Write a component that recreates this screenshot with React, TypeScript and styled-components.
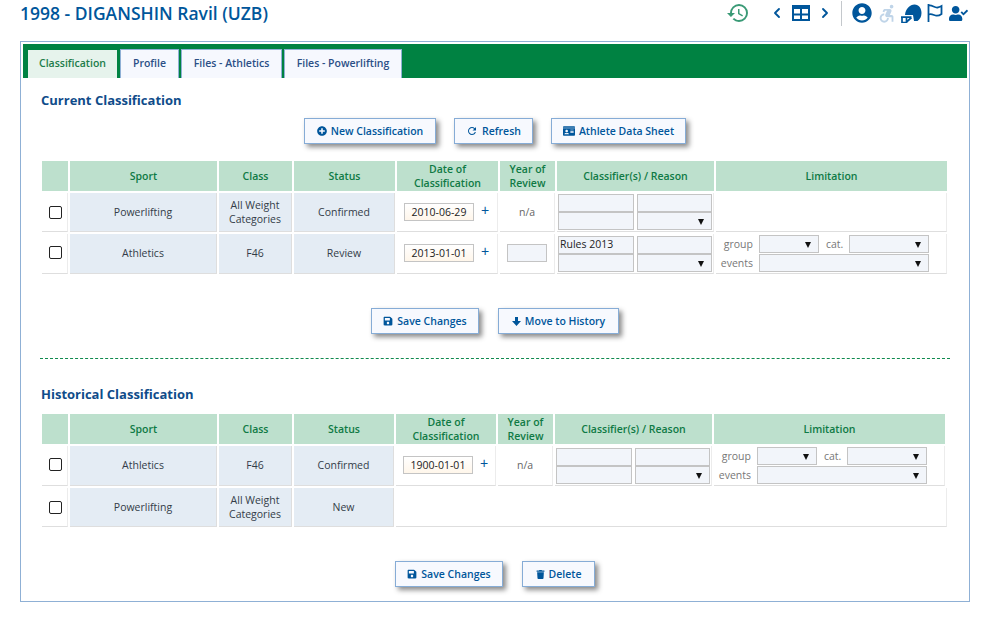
import React from 'react';
import styled, { createGlobalStyle } from 'styled-components';
import { ChevronLeft, ChevronRight } from 'lucide-react';
import {
  FaIdCard,
  FaPlusCircle,
  FaSave,
  FaTrash,
  FaUserCheck,
  FaUserCircle,
} from 'react-icons/fa';
import { MdAccessibleForward, MdHistory, MdRefresh } from 'react-icons/md';

const BLUE = '#00569b';
const FONT = `'Open Sans', 'Noto Sans', sans-serif`;

const GlobalStyle = createGlobalStyle`
  html, body {
    margin: 0;
    padding: 0;
    background: #fff;
    font-family: ${FONT};
    font-size: 10.5px;
    color: #333;
  }
`;

const Page = styled.div`
  width: 990px;
  height: 621px;
  overflow: hidden;
  box-sizing: border-box;
`;

const TopBar = styled.header`
  height: 41px;
  display: flex;
  align-items: flex-start;
  justify-content: space-between;
  padding: 0 20px;
  box-sizing: border-box;
`;

const Title = styled.h1`
  margin: 2px 0 0;
  font-size: 17.5px;
  line-height: 22px;
  font-weight: 600;
  color: ${BLUE};
`;

const Tools = styled.div`
  display: flex;
  align-items: center;
  height: 26px;
  color: ${BLUE};
`;

const ToolSlot = styled.span<{ $w: number; $color?: string }>`
  width: ${({ $w }) => $w}px;
  display: flex;
  justify-content: center;
  color: ${({ $color }) => $color || 'inherit'};
`;

const Divider = styled.span`
  width: 1px;
  height: 25px;
  background: #c4c8cc;
  margin: 0 6px 0 8px;
`;

const Panel = styled.main`
  width: 950px;
  height: 561px;
  margin-left: 20px;
  box-sizing: border-box;
  border: 1px solid #8fb0d5;
  padding: 2px;
`;

const TabBar = styled.nav`
  height: 34px;
  background: #008242;
  display: flex;
  align-items: flex-end;
  padding-left: 5px;
  gap: 2px;
  box-sizing: border-box;
`;

const Tab = styled.div<{ $active?: boolean; $w: number }>`
  width: ${({ $w }) => $w}px;
  height: ${({ $active }) => ($active ? 28 : 29)}px;
  margin-right: ${({ $active }) => ($active ? 1 : 0)}px;
  padding-bottom: 3px;
  box-sizing: border-box;
  display: flex;
  align-items: center;
  justify-content: center;
  font-size: 10.5px;
  font-weight: 600;
  color: ${({ $active }) => ($active ? '#1c7d4a' : '#2b4f86')};
  background: ${({ $active }) => ($active ? '#e6f3ec' : '#f6f8fe')};
  border: ${({ $active }) => ($active ? 'none' : '1px solid #8fb0d5')};
  border-bottom: none;
`;

const Content = styled.div`
  padding: 0 0 0 17px;
`;

const Heading = styled.h2<{ $top: number }>`
  margin: ${({ $top }) => $top}px 0 0 1px;
  font-size: 13px;
  line-height: 18px;
  font-weight: 700;
  color: #0f4c8a;
`;

const ButtonRow = styled.div<{ $top: number; $left: number; $gap: number }>`
  display: flex;
  gap: ${({ $gap }) => $gap}px;
  margin: ${({ $top }) => $top}px 0 0 ${({ $left }) => $left}px;
`;

const Action = styled.button<{ $w: number }>`
  width: ${({ $w }) => $w}px;
  height: 26px;
  padding: 0;
  display: flex;
  align-items: center;
  justify-content: center;
  gap: 4px;
  background: #f7f9fe;
  border: 1px solid #86acd6;
  box-shadow: 3px 3px 5px #8a8a8a;
  font-family: ${FONT};
  font-size: 10.5px;
  font-weight: 600;
  color: ${BLUE};
`;

const Grid = styled.table<{ $top: number }>`
  width: 909px;
  table-layout: fixed;
  border-collapse: separate;
  border-spacing: 2px;
  margin-top: ${({ $top }) => $top}px;
`;

const Col = styled.col<{ $w: number }>`
  width: ${({ $w }) => $w}px;
`;

const Head = styled.th`
  height: 30px;
  padding: 0;
  background: #bde0cd;
  color: #0f7a45;
  font-size: 10.5px;
  line-height: 14px;
  font-weight: 600;
  text-align: center;
`;

const Cell = styled.td<{ $shade?: boolean; $tall?: boolean; $lift?: boolean }>`
  height: ${({ $tall }) => ($tall ? 40 : 39)}px;
  padding: 0 0 ${({ $lift }) => ($lift ? 2 : 0)}px;
  box-sizing: border-box;
  text-align: center;
  font-size: 10.5px;
  line-height: 14px;
  color: ${({ $shade }) => ($shade ? '#333c48' : '#666')};
  background: ${({ $shade }) => ($shade ? '#e4ecf4' : '#fff')};
  border-bottom: 1px solid #dedede;
  border-right: 1px solid ${({ $shade }) => ($shade ? '#dedede' : '#ececec')};
`;

const Tick = styled.input.attrs({ type: 'checkbox' })`
  appearance: none;
  display: block;
  width: 13px;
  height: 13px;
  margin: 0 0 0 7px;
  box-sizing: border-box;
  border: 1px solid #222;
  border-radius: 2px;
  background: #fff;
`;

const DateWrap = styled.div`
  display: flex;
  align-items: center;
  padding-left: 7px;
  gap: 7px;
`;

const DateField = styled.input`
  width: 70px;
  height: 18px;
  padding: 0;
  box-sizing: border-box;
  text-align: center;
  font-family: ${FONT};
  font-size: 10.5px;
  color: #222;
  border: 1px solid #c4c4c4;
  background: linear-gradient(#fff, #fff6ea);
`;

const Plus = styled.span`
  font-family: 'Liberation Sans', sans-serif;
  font-size: 14px;
  color: ${BLUE};
  position: relative;
  top: -2px;
`;

const YearField = styled.input`
  display: block;
  width: 40px;
  height: 18px;
  margin: 0 auto;
  padding: 0;
  box-sizing: border-box;
  border: 1px solid #c4c4c4;
  background: #f2f5fa;
`;

const PairGrid = styled.div`
  display: grid;
  grid-template-columns: 76px 75px;
  column-gap: 3px;
  padding: 0 0 0 1px;
`;

const TextField = styled.input`
  width: 100%;
  height: 18px;
  padding: 0 2px 2px 1px;
  box-sizing: border-box;
  font-family: ${FONT};
  font-size: 10.5px;
  color: #222;
  border: 1px solid #c4c4c4;
  background: #f2f5fa;
`;

const Picker = styled.div`
  position: relative;
  width: 100%;
  height: 18px;
  box-sizing: border-box;
  border: 1px solid #c4c4c4;
  background: #f2f5fa;

  &::after {
    content: '';
    position: absolute;
    right: 7px;
    top: 6px;
    border-left: 3px solid transparent;
    border-right: 3px solid transparent;
    border-top: 6px solid #111;
  }
`;

const LimitGrid = styled.div`
  display: grid;
  grid-template-columns: 36px 60px 18px 80px;
  grid-auto-rows: 18px;
  column-gap: 6px;
  row-gap: 1px;
  align-items: center;
  padding-left: 1px;
  font-size: 10.5px;
  color: #777;
  text-align: right;
`;

const WideSlot = styled.div`
  grid-column: 2 / span 3;
`;

const CatLabel = styled.span`
  text-align: left;
  padding-left: 1px;
`;

const Separator = styled.hr`
  width: 910px;
  margin: 24px 0 0;
  border: none;
  border-top: 1px dashed #0f8a4e;
`;

const columnsCurrent = [26, 147, 73, 101, 101, 55, 157, 231];
const columnsHistory = [26, 147, 73, 100, 100, 55, 157, 231, 0];
const headings = ['', 'Sport', 'Class', 'Status', 'Date of\nClassification', 'Year of\nReview', 'Classifier(s) / Reason', 'Limitation'];

const TableIcon = () => (
  <svg width="18" height="16" viewBox="0 0 18 16" fill="none" stroke="currentColor" strokeWidth="2">
    <rect x="1" y="1" width="16" height="14" />
    <path d="M1 3h16M1 9.500h16M9 4v11" />
  </svg>
);

const HelmetIcon = () => (
  <svg width="22" height="19" viewBox="0 0 22 19">
    <path
      fill="currentColor"
      d="M5 11C5.500 5 10 .5 14.500 .5 19 .5 21.500 4.500 21.500 9c0 3.500-1.500 6.500-4 8h-3.500l-1-6z"
    />
    <path fill="none" stroke="currentColor" strokeWidth="1.700" d="M1 13.200h10.500M2 12.500v6h4.500v-5.300M6.500 18l5-4.500" />
  </svg>
);

const FlagIcon = () => (
  <svg width="16" height="18" viewBox="0 0 16 18" fill="none" stroke="currentColor" strokeWidth="1.800">
    <path d="M1.500 0v18" />
    <path d="M1.500 1.500c3.500-1 6 2.500 9 2 1.500-.3 3-1 4-1.500v8c-2 1.500-4 2-6 1.500s-4-2-7-1" />
  </svg>
);

const DownArrow = () => (
  <svg width="9" height="9" viewBox="0 0 9 9" fill="currentColor">
    <path d="M3 0h3v4h3L4.500 9 0 4h3z" />
  </svg>
);

const Pair = ({ reason }: { reason?: string }) => (
  <PairGrid>
    <TextField defaultValue={reason} />
    <TextField />
    <TextField />
    <Picker />
  </PairGrid>
);

const Limits = () => (
  <LimitGrid>
    <span>group</span>
    <Picker />
    <CatLabel>cat.</CatLabel>
    <Picker />
    <span>events</span>
    <WideSlot>
      <Picker />
    </WideSlot>
  </LimitGrid>
);

const Dated = ({ value }: { value: string }) => (
  <DateWrap>
    <DateField defaultValue={value} />
    <Plus>+</Plus>
  </DateWrap>
);

const HeadRow = () => (
  <tr>
    {headings.map((h, i) => (
      <Head key={i}>
        {h.split('\n').map((line, j) => (
          <React.Fragment key={j}>
            {j > 0 && <br />}
            {line}
          </React.Fragment>
        ))}
      </Head>
    ))}
  </tr>
);

const Lead = ({
  sport,
  cls,
  status,
  tall,
}: {
  sport: string;
  cls: React.ReactNode;
  status: string;
  tall?: boolean;
}) => (
  <>
    <Cell $tall={tall} $lift={tall}>
      <Tick />
    </Cell>
    <Cell $shade $tall={tall} $lift={tall}>{sport}</Cell>
    <Cell $shade $tall={tall} $lift={tall}>{cls}</Cell>
    <Cell $shade $tall={tall} $lift={tall}>{status}</Cell>
  </>
);

const AllWeight = (
  <>
    All Weight
    <br />
    Categories
  </>
);

const App = (): JSX.Element => (
  <Page>
    <GlobalStyle />
    <TopBar>
      <Title>1998 - DIGANSHIN Ravil (UZB)</Title>
      <Tools>
        <ToolSlot $w={24} $color="#3a9a76">
          <MdHistory size={24} />
        </ToolSlot>
        <ToolSlot $w={19} />
        <ToolSlot $w={16}>
          <ChevronLeft size={20} strokeWidth={2.8} />
        </ToolSlot>
        <ToolSlot $w={32}>
          <TableIcon />
        </ToolSlot>
        <ToolSlot $w={16}>
          <ChevronRight size={20} strokeWidth={2.8} />
        </ToolSlot>
        <Divider />
        <ToolSlot $w={28}>
          <FaUserCircle size={20} />
        </ToolSlot>
        <ToolSlot $w={22} $color="#bfd4e8">
          <MdAccessibleForward size={25} />
        </ToolSlot>
        <ToolSlot $w={26}>
          <HelmetIcon />
        </ToolSlot>
        <ToolSlot $w={22}>
          <FlagIcon />
        </ToolSlot>
        <ToolSlot $w={24}>
          <FaUserCheck size={19} />
        </ToolSlot>
      </Tools>
    </TopBar>
    <Panel>
      <TabBar>
        <Tab $active $w={89}>Classification</Tab>
        <Tab $w={59}>Profile</Tab>
        <Tab $w={101}>Files - Athletics</Tab>
        <Tab $w={118}>Files - Powerlifting</Tab>
      </TabBar>
      <Content>
        <Heading $top={13}>Current Classification</Heading>
        <ButtonRow $top={9} $left={264} $gap={18}>
          <Action $w={132}>
            <FaPlusCircle size={10} />
            New Classification
          </Action>
          <Action $w={79}>
            <MdRefresh size={12} />
            Refresh
          </Action>
          <Action $w={135}>
            <FaIdCard size={12} />
            Athlete Data Sheet
          </Action>
        </ButtonRow>
        <Grid $top={15}>
          <colgroup>
            {columnsCurrent.map((w, i) => (
              <Col key={i} $w={w} />
            ))}
          </colgroup>
          <thead>
            <HeadRow />
          </thead>
          <tbody>
            <tr>
              <Lead sport="Powerlifting" cls={AllWeight} status="Confirmed" />
              <Cell>
                <Dated value="2010-06-29" />
              </Cell>
              <Cell>n/a</Cell>
              <Cell>
                <Pair />
              </Cell>
              <Cell />
            </tr>
            <tr>
              <Lead sport="Athletics" cls="F46" status="Review" tall />
              <Cell $tall $lift>
                <Dated value="2013-01-01" />
              </Cell>
              <Cell $tall $lift>
                <YearField />
              </Cell>
              <Cell $tall>
                <Pair reason="Rules 2013" />
              </Cell>
              <Cell $tall>
                <Limits />
              </Cell>
            </tr>
          </tbody>
        </Grid>
        <ButtonRow $top={32} $left={331} $gap={19}>
          <Action $w={108}>
            <FaSave size={10} />
            Save Changes
          </Action>
          <Action $w={121}>
            <DownArrow />
            Move to History
          </Action>
        </ButtonRow>
        <Separator />
        <Heading $top={26}>Historical Classification</Heading>
        <Grid $top={9}>
          <colgroup>
            {columnsHistory.map((w, i) => (
              <Col key={i} $w={w} />
            ))}
          </colgroup>
          <thead>
            <HeadRow />
          </thead>
          <tbody>
            <tr>
              <Lead sport="Athletics" cls="F46" status="Confirmed" tall />
              <Cell $tall $lift>
                <Dated value="1900-01-01" />
              </Cell>
              <Cell $tall $lift>n/a</Cell>
              <Cell $tall>
                <Pair />
              </Cell>
              <Cell $tall>
                <Limits />
              </Cell>
            </tr>
            <tr>
              <Lead sport="Powerlifting" cls={AllWeight} status="New" />
              <Cell colSpan={5} />
            </tr>
          </tbody>
        </Grid>
        <ButtonRow $top={32} $left={355} $gap={19}>
          <Action $w={108}>
            <FaSave size={10} />
            Save Changes
          </Action>
          <Action $w={73}>
            <FaTrash size={9} />
            Delete
          </Action>
        </ButtonRow>
      </Content>
    </Panel>
  </Page>
);

export default App;
